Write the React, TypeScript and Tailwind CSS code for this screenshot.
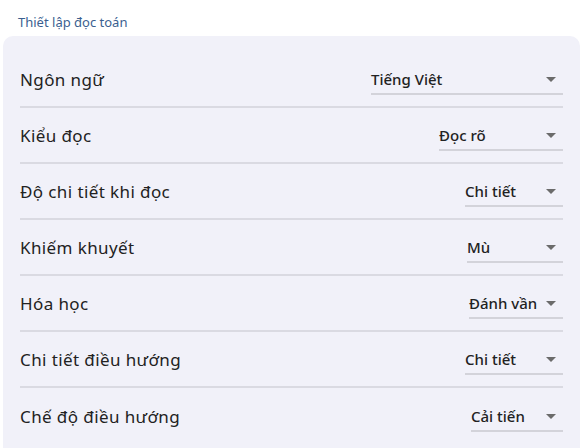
const rows = [
  { label: 'Ngôn ngữ', value: 'Tiếng Việt', width: 'w-[192px]' },
  { label: 'Kiểu đọc', value: 'Đọc rõ', width: 'w-[124px]' },
  { label: 'Độ chi tiết khi đọc', value: 'Chi tiết', width: 'w-[98px]' },
  { label: 'Khiếm khuyết', value: 'Mù', width: 'w-[96px]' },
  { label: 'Hóa học', value: 'Đánh vần', width: 'w-[94px]' },
  { label: 'Chi tiết điều hướng', value: 'Chi tiết', width: 'w-[98px]' },
  { label: 'Chế độ điều hướng', value: 'Cải tiến', width: 'w-[92px]' },
];

const Caret = () => (
  <svg width="10" height="5" viewBox="0 0 10 5" className="shrink-0">
    <path d="M0 0h10L5 5z" fill="#6b6b6b" />
  </svg>
);

export default function App() {
  return (
    <div className="w-[585px] h-[448px] overflow-hidden bg-white font-['Noto_Sans',sans-serif]">
      <div className="pl-[18px] pt-[13px] text-[13px] leading-[18px] text-[#3b5f90]">
        Thiết lập đọc toán
      </div>

      <div className="mt-[5px] ml-[3px] mr-[5px] rounded-[10px] bg-[#f1f1f9] px-[17px] pt-[15.5px] pb-4">
        {rows.map((row, i) => (
          <div
            key={row.label}
            className={`flex h-[56px] items-center justify-between pt-[3px] ${
              i < rows.length - 1 ? 'border-b-2 border-[#dadae2]' : ''
            }`}
          >
            <span className="text-[17px] tracking-[0.4px] text-[#222]">{row.label}</span>
            <div
              className={`${row.width} flex h-[29px] items-center border-b-2 border-[#d3d3da] pr-[7px]`}
            >
              <span className="flex-1 pt-px text-[15px] font-medium text-[#222]">{row.value}</span>
              <Caret />
            </div>
          </div>
        ))}
      </div>
    </div>
  );
}
